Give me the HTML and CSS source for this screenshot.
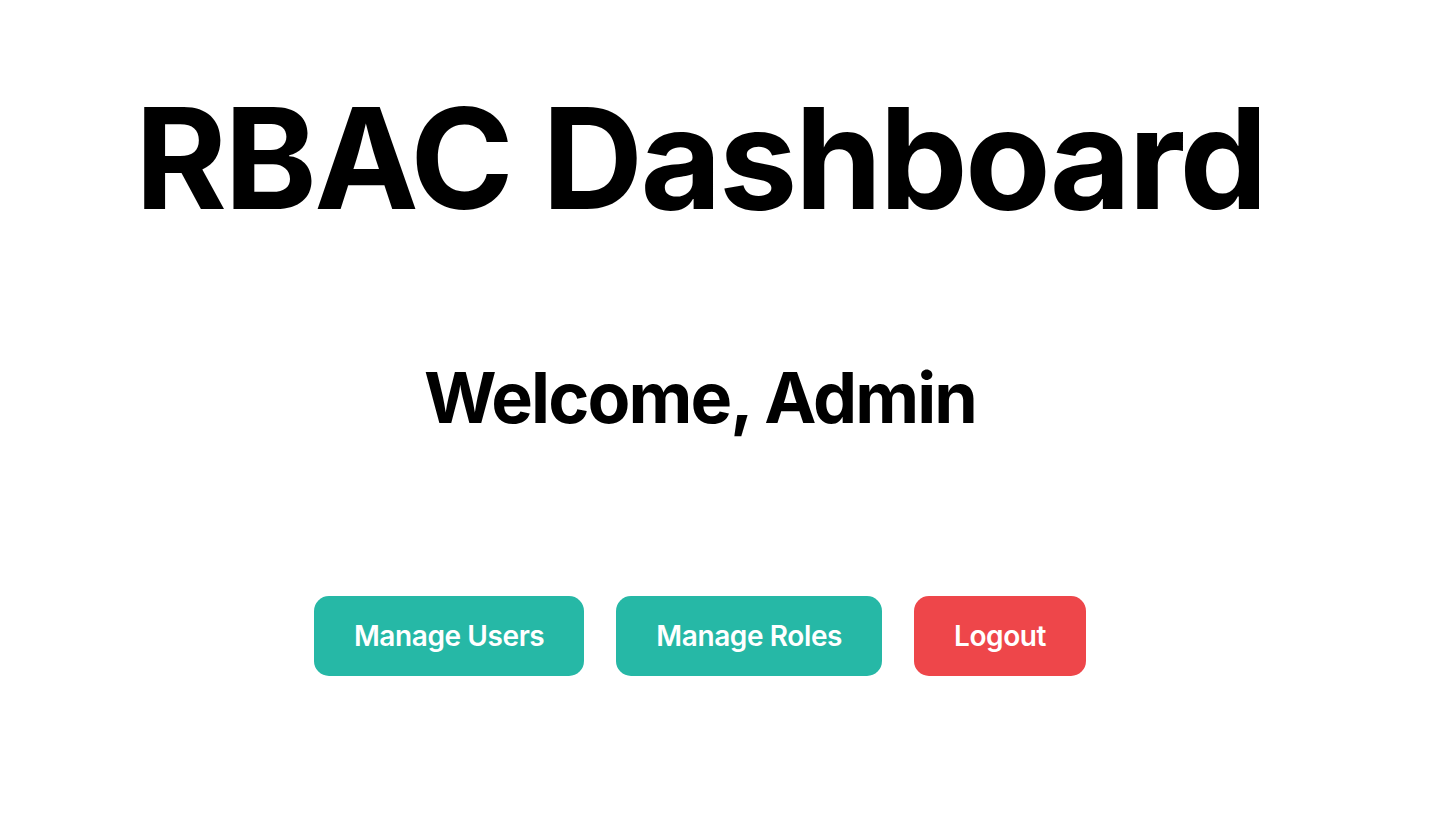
FILE: index.html
```html
<!DOCTYPE html>
<html lang="en">
<head>
<meta charset="utf-8">
<title>RBAC Dashboard</title>
<link rel="stylesheet" href="styles.css">
</head>
<body>
<main class="page">
  <h1 class="title">RBAC Dashboard</h1>
  <h2 class="welcome">Welcome, Admin</h2>
  <div class="actions">
    <button class="btn btn-teal">Manage Users</button>
    <button class="btn btn-teal">Manage Roles</button>
    <button class="btn btn-red">Logout</button>
  </div>
</main>
</body>
</html>
```
FILE: styles.css
```css
html, body {
  margin: 0;
  padding: 0;
  background: #ffffff;
}
body {
  font-family: Inter, "Noto Sans", sans-serif;
  color: #000;
}
.page {
  width: 1400px;
  padding-top: 73px;
  display: flex;
  flex-direction: column;
  align-items: center;
  text-align: center;
}
.title {
  margin: 0;
  font-size: 140px;
  line-height: 170px;
  font-weight: 700;
  letter-spacing: -2.6px;
}
.welcome {
  margin: 112px 0 0;
  font-size: 70px;
  line-height: 85px;
  font-weight: 700;
  letter-spacing: -1.9px;
}
.actions {
  margin-top: 156px;
  display: flex;
  gap: 32px;
}
.btn {
  border: none;
  border-radius: 15px;
  padding: 24px 40px;
  font-family: Inter, "Noto Sans", sans-serif;
  font-size: 28px;
  line-height: 32px;
  font-weight: 600;
  letter-spacing: -0.4px;
  color: #fff;
  cursor: pointer;
}
.btn-teal {
  background: #26b8a6;
}
.btn-red {
  background: #ee464a;
}
```
